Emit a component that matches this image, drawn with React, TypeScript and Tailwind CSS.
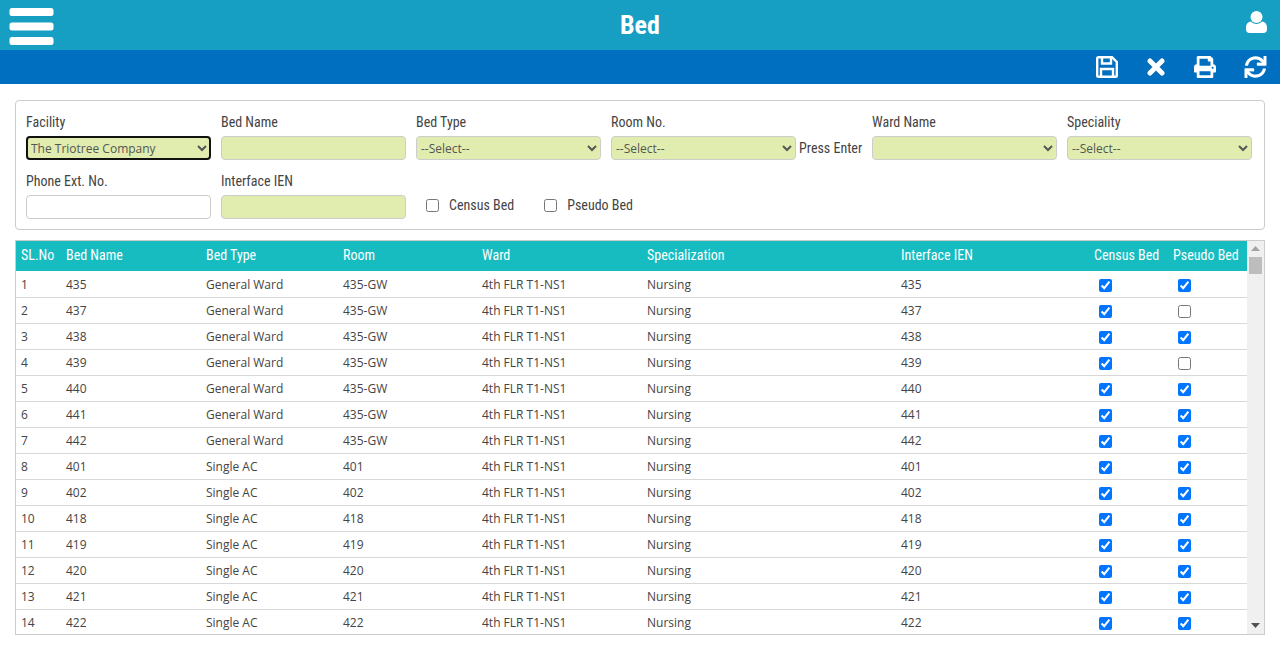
import React from 'react';
import { FaPrint, FaSync } from 'react-icons/fa';

const beds = [
  ['435', 'General Ward', '435-GW', true],
  ['437', 'General Ward', '435-GW', false],
  ['438', 'General Ward', '435-GW', true],
  ['439', 'General Ward', '435-GW', false],
  ['440', 'General Ward', '435-GW', true],
  ['441', 'General Ward', '435-GW', true],
  ['442', 'General Ward', '435-GW', true],
  ['401', 'Single AC', '401', true],
  ['402', 'Single AC', '402', true],
  ['418', 'Single AC', '418', true],
  ['419', 'Single AC', '419', true],
  ['420', 'Single AC', '420', true],
  ['421', 'Single AC', '421', true],
  ['422', 'Single AC', '422', true],
] as const;

const label = "block h-[35px] pt-[12px] text-[14px] leading-[18px] text-[#444] [font-family:Roboto,sans-serif] [font-stretch:75%]";
const field = "block w-[185px] h-[24px] rounded-[4px] border border-[#ccc] bg-[#e0edae] text-[12px] text-[#555] [font-family:'Open_Sans',sans-serif]";
const cell = "pl-[5px] border-b border-[#d8d8d8]";
const checkCell = "pl-[10px] pt-[2px] border-b border-[#d8d8d8]";

const Field: React.FC<{ title: string; children: React.ReactNode }> = ({ title, children }) => (
  <div className="w-[185px] shrink-0">
    <label className={label}>{title}</label>
    {children}
  </div>
);

const Select: React.FC<{ text: string; focus?: boolean }> = ({ text, focus }) => (
  <select className={focus ? field + ' border-[#111] outline-2 -outline-offset-2 outline-[#111]' : field} defaultValue={text}>
    <option>{text}</option>
  </select>
);

const Th: React.FC<{ w: string; children: React.ReactNode }> = ({ w, children }) => (
  <th className={`${w} pl-[5px] pb-[2px] border-b border-white text-left font-normal text-white text-[14px] [font-family:Roboto,sans-serif] [font-stretch:75%]`}>{children}</th>
);

export default function App() {
  return (
    <div className="h-[645px] w-[1280px] overflow-hidden bg-white">
      {/* Title bar */}
      <div className="h-[50px] bg-[#169fc3] flex items-center justify-between pl-[9px] pr-[13px] text-white">
        <div className="w-[60px] mt-[4px]">
          <svg className="block" width="45" height="38" viewBox="0 0 45 38" fill="currentColor">
            <rect x="0.5" y="0" width="44" height="8" rx="2.5" />
            <rect x="0.5" y="14.5" width="44" height="8" rx="2.5" />
            <rect x="0.5" y="29" width="44" height="8" rx="2.5" />
          </svg>
        </div>
        <h1 className="text-[26px] font-bold [font-family:Roboto,sans-serif] [font-stretch:75%]">Bed</h1>
        <div className="w-[56px] flex justify-end -mt-[6px]">
          <svg width="21" height="22" viewBox="0 0 21 22" fill="currentColor">
            <circle cx="10.5" cy="6" r="6" />
            <path d="M5 10.500c1.400 1.500 3.300 2.400 5.500 2.400s4.100-.9 5.500-2.400c3 .3 5 2.500 5 6.500v1.500c0 2.200-1.300 3.500-3.500 3.500h-14C1.300 22 0 20.700 0 18.500V17c0-4 2-6.200 5-6.500z" />
          </svg>
        </div>
      </div>
      {/* Toolbar */}
      <div className="h-[34px] bg-[#006fc0] flex items-center justify-end pr-[13px] text-white">
        <svg width="22" height="22" viewBox="0 0 22 22" fill="none" stroke="currentColor" strokeWidth="2.400">
          <path d="M1.200 2.500c0-.7.600-1.300 1.300-1.300H16l4.800 4.800v13.500c0 .7-.6 1.300-1.300 1.300h-17c-.7 0-1.300-.6-1.300-1.300z" />
          <path d="M6 1v6.500h9V1M5 21v-8h12v8" />
        </svg>
        <svg className="ml-[29px]" width="18" height="18" viewBox="0 0 18 18" fill="none" stroke="currentColor" strokeWidth="5" strokeLinecap="round">
          <path d="M3 3l12 12M15 3L3 15" />
        </svg>
        <FaPrint className="ml-[28px] w-[24px] h-[22px]" />
        <FaSync className="ml-[27px] w-[23px] h-[22px]" />
      </div>

      <div className="px-[15px] pt-[16px]">
        {/* Filter card */}
        <div className="h-[130px] rounded-[4px] border border-[#ccc] px-[10px]">
          <div className="flex gap-[10px]">
            <Field title="Facility"><Select text="The Triotree Company" focus /></Field>
            <Field title="Bed Name"><input className={field} /></Field>
            <Field title="Bed Type"><Select text="--Select--" /></Field>
            <div className="flex shrink-0">
              <Field title="Room No."><Select text="--Select--" /></Field>
              <span className="ml-[3px] w-[63px] pt-[38px] text-[14px] leading-[18px] text-[#444] whitespace-nowrap [font-family:Roboto,sans-serif] [font-stretch:75%]">Press Enter</span>
            </div>
            <Field title="Ward Name"><Select text="" /></Field>
            <Field title="Speciality"><Select text="--Select--" /></Field>
          </div>
          <div className="flex gap-[10px]">
            <Field title="Phone Ext. No."><input className={field + ' bg-white'} /></Field>
            <Field title="Interface IEN"><input className={field} /></Field>
            <label className="ml-[10px] mt-[33px] h-[24px] flex items-center gap-[10px] text-[14px] text-[#444] [font-family:Roboto,sans-serif] [font-stretch:75%]">
              <input type="checkbox" className="w-[13px] h-[13px]" /> Census Bed
            </label>
            <label className="ml-[20px] mt-[33px] h-[24px] flex items-center gap-[10px] text-[14px] text-[#444] [font-family:Roboto,sans-serif] [font-stretch:75%]">
              <input type="checkbox" className="w-[13px] h-[13px]" /> Pseudo Bed
            </label>
          </div>
        </div>

        {/* Bed list */}
        <div className="mt-[10px] h-[395px] border border-[#ccc] flex overflow-hidden">
          <div className="w-[1232px] overflow-hidden">
            <table className="table-fixed w-full border-separate border-spacing-0">
              <thead>
                <tr className="h-[31px] bg-[#17bcc1]">
                  <Th w="w-[45px]">SL.No</Th>
                  <Th w="w-[140px]">Bed Name</Th>
                  <Th w="w-[137px]">Bed Type</Th>
                  <Th w="w-[139px]">Room</Th>
                  <Th w="w-[165px]">Ward</Th>
                  <Th w="w-[254px]">Specialization</Th>
                  <Th w="w-[193px]">Interface IEN</Th>
                  <Th w="w-[79px]">Census Bed</Th>
                  <Th w="w-[80px]">Pseudo Bed</Th>
                </tr>
              </thead>
              <tbody className="text-[12px] text-[#444] [font-family:'Open_Sans',sans-serif]">
                {beds.map((b, i) => (
                  <tr key={b[0]} className="h-[26px]">
                    <td className={cell}>{i + 1}</td>
                    <td className={cell}>{b[0]}</td>
                    <td className={cell}>{b[1]}</td>
                    <td className={cell}>{b[2]}</td>
                    <td className={cell}>4th FLR T1-NS1</td>
                    <td className={cell}>Nursing</td>
                    <td className={cell}>{b[0]}</td>
                    <td className={checkCell}><input type="checkbox" defaultChecked className="block w-[13px] h-[13px]" /></td>
                    <td className={checkCell}><input type="checkbox" defaultChecked={b[3]} className="block w-[13px] h-[13px]" /></td>
                  </tr>
                ))}
              </tbody>
            </table>
          </div>
          {/* Scrollbar */}
          <div className="w-[17px] bg-[#f0f0f0] flex flex-col items-center">
            <svg className="mt-[5px] shrink-0" width="9" height="5" viewBox="0 0 9 5"><path d="M4.500 0L9 5H0z" fill="#a3a3a3" /></svg>
            <div className="mt-[6px] w-[13px] h-[17px] bg-[#bdbdbd]" />
            <svg className="mt-auto mb-[6px] shrink-0" width="9" height="5" viewBox="0 0 9 5"><path d="M0 0h9L4.500 5z" fill="#505050" /></svg>
          </div>
        </div>
      </div>
    </div>
  );
}
